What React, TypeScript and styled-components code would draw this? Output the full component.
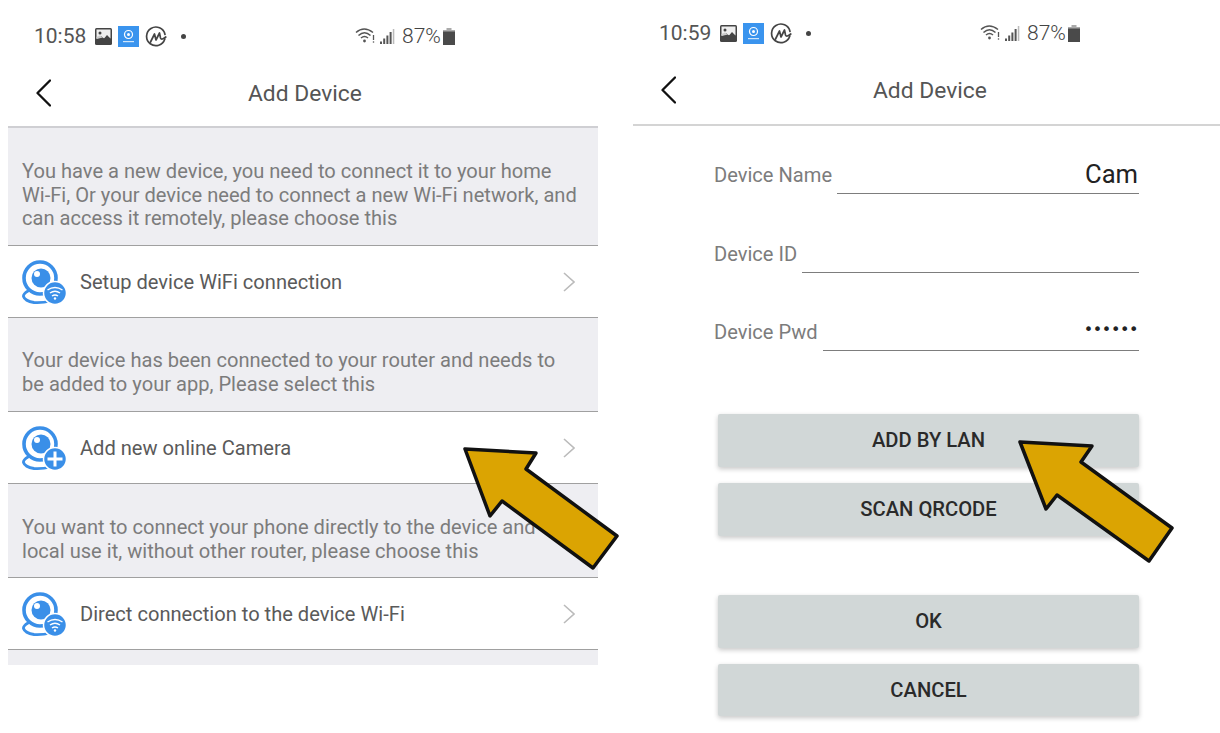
import React from 'react';
import styled, { createGlobalStyle } from 'styled-components';

const Global = createGlobalStyle`
  html, body { margin: 0; padding: 0; background: #fff; }
  body { font-family: Roboto, "Liberation Sans", sans-serif; }
`;

const Page = styled.div`
  position: relative;
  width: 1220px;
  height: 733px;
  overflow: hidden;
  display: flex;
  align-items: flex-start;
  background: #fff;
`;
const Panel = styled.div<{ $left: number; $width: number; $top: number }>`
  margin-left: ${p => p.$left}px;
  width: ${p => p.$width}px;
  padding-top: ${p => p.$top}px;
  flex: none;
`;
const StatusBar = styled.div`
  height: 46px;
  display: flex;
  align-items: center;
  color: #555;
  padding-left: 26px;
`;
const Time = styled.span`
  font-size: 21px;
  width: 61px;
  flex: none;
`;
const LeftIcons = styled.div`
  display: flex;
  align-items: center;
  gap: 6px;
  width: 260px;
  flex: none;
`;
const RightIcons = styled.div`
  display: flex;
  align-items: center;
`;
const WifiGap = styled.span`
  width: 4px;
`;
const Percent = styled.span`
  font-size: 21px;
  font-weight: 300;
  color: #444;
  margin: 0 2px 0 7px;
`;
const Nav = styled.div<{ $h: number; $line: string }>`
  box-sizing: border-box;
  height: ${p => p.$h}px;
  border-bottom: 2px solid ${p => p.$line};
  display: flex;
  align-items: center;
  padding-left: 28px;
`;
const Back = styled.svg`
  width: 15px;
  height: 28px;
  flex: none;
`;
const Title = styled.div`
  margin-left: 197px;
  font-size: 22.8px;
  color: #555;
  padding-top: 1px;
`;
const Note = styled.div<{ $h: number; $pt: number }>`
  box-sizing: border-box;
  height: ${p => p.$h}px;
  padding: ${p => p.$pt}px 18px 0 14px;
  background: #eeeef2;
  color: #7c7c7c;
  font-size: 20.1px;
  line-height: 23.7px;
  border-bottom: 1px solid #a0a0a0;
`;
const Row = styled.div`
  box-sizing: border-box;
  height: 72px;
  display: flex;
  align-items: center;
  padding: 0 23px 0 14px;
  background: #fff;
  border-bottom: 1px solid #a0a0a0;
`;
const RowLabel = styled.span`
  margin-left: 14px;
  font-size: 20.1px;
  color: #5a5a5a;
`;
const Chevron = styled.svg`
  margin-left: auto;
  width: 12px;
  height: 20px;
`;
const Tail = styled.div`
  height: 15px;
  background: #eeeef2;
`;
const Form = styled.div`
  padding: 28px 81px 0 81px;
  display: flex;
  flex-direction: column;
  gap: 38.5px;
`;
const Field = styled.div`
  height: 40px;
  display: flex;
  align-items: center;
  gap: 5px;
`;
const Label = styled.span`
  font-size: 20.1px;
  color: #7c7c7c;
  flex: none;
  padding-top: 2px;
`;
const Input = styled.div`
  flex: 1;
  height: 40px;
  box-sizing: border-box;
  border-bottom: 1.5px solid #7d7d7d;
  display: flex;
  align-items: center;
  justify-content: flex-end;
  color: #222;
`;
const CamText = styled.span`
  font-size: 25.6px;
  padding-right: 1px;
`;
const PwdDots = styled.span`
  font-size: 16px;
  letter-spacing: -0.4px;
  padding-bottom: 3px;
  padding-right: 1px;
  font-family: "DejaVu Sans", sans-serif;
`;
const Buttons = styled.div`
  margin: 63px 81px 0 85px;
  display: flex;
  flex-direction: column;
`;
const Button = styled.div<{ $mt: number }>`
  height: 52.5px;
  margin-top: ${p => p.$mt}px;
  background: #d1d7d7;
  border-radius: 2px;
  box-shadow: 0 2px 5px rgba(0, 0, 0, 0.22);
  display: flex;
  align-items: center;
  justify-content: center;
  font-size: 20.2px;
  font-weight: 500;
  color: #2a2a2a;
`;
const ArrowSvg = styled.svg<{ $x: number; $y: number }>`
  position: absolute;
  left: ${p => p.$x}px;
  top: ${p => p.$y}px;
  width: 170px;
  height: 135px;
`;

const Photo = () => (
  <svg width="17" height="17" viewBox="0 0 17 17">
    <rect width="17" height="17" rx="1.5" fill="#444" />
    <rect x="1.5" y="1.5" width="14" height="9" fill="#eee" />
    <circle cx="5" cy="5" r="1.5" fill="#444" />
    <path d="M1.5 12 L6 8 L9 10.5 L12 7 L15.5 10.5 V12 Z" fill="#444" />
    <path d="M1.5 9 L5 7.5 L8 9.5 L1.5 11 Z" fill="#ccc" />
  </svg>
);
const AppSquare = () => (
  <svg width="21" height="21" viewBox="0 0 21 21">
    <rect width="21" height="21" fill="#3a94ee" />
    <circle cx="10.5" cy="8.5" r="4" fill="none" stroke="#fff" strokeWidth="1.2" />
    <circle cx="10.5" cy="8.5" r="1.5" fill="#fff" />
    <rect x="5" y="15" width="11" height="1.2" fill="#cfe6fb" />
  </svg>
);
const Coin = () => (
  <svg width="22" height="21" viewBox="0 0 22 21" fill="none" stroke="#444" strokeWidth="1.7" strokeLinecap="round" strokeLinejoin="round">
    <path d="M19.8 13 A9.3 9.3 0 1 1 20 8.5" />
    <path d="M5.5 16 L9.5 8 L11 14 L14.5 7 L15.5 12 Q16.5 14.500 20.8 11" />
  </svg>
);
const Dot = styled.span`
  width: 5px;
  height: 5px;
  border-radius: 50%;
  background: #444;
  margin-left: 8px;
`;
const Wifi = () => (
  <svg width="21" height="18" viewBox="0 0 21 18" fill="none" stroke="#555" strokeWidth="1.5">
    <path d="M1 5.5 Q9 -1.5 18 5.5" />
    <path d="M3.5 8.5 Q9.500 3 15.500 8.500" />
    <path d="M6 11 Q9.500 8 13 11" />
    <circle cx="9.500" cy="14" r="1.400" fill="#555" stroke="none" />
    <path d="M18.500 8 V13" strokeWidth="1.300" />
    <circle cx="18.500" cy="15" r="0.800" fill="#555" stroke="none" />
  </svg>
);
const Signal = () => (
  <svg width="15" height="17" viewBox="0 0 15 17" fill="#555">
    <rect x="0" y="13.500" width="2" height="2.500" />
    <rect x="3.200" y="10.500" width="2" height="5.500" />
    <rect x="6.400" y="7.500" width="2" height="8.500" />
    <rect x="9.600" y="4" width="2" height="12" />
    <rect x="12.800" y="1" width="1.500" height="15" fill="#bbb" />
  </svg>
);
const Battery = () => (
  <svg width="12" height="17" viewBox="0 0 12 17">
    <rect x="3.500" y="0" width="5" height="2.500" fill="#aaa" />
    <rect x="0" y="2" width="12" height="2" fill="#aaa" />
    <rect x="0" y="3.500" width="12" height="13.500" fill="#4a4a4a" />
  </svg>
);

const Status = ({ time }: { time: string }) => (
  <StatusBar>
    <Time>{time}</Time>
    <LeftIcons>
      <Photo />
      <AppSquare />
      <Coin />
      <Dot />
    </LeftIcons>
    <RightIcons>
      <Wifi />
      <WifiGap />
      <Signal />
      <Percent>87%</Percent>
      <Battery />
    </RightIcons>
  </StatusBar>
);

const Header = ({ h, line }: { h: number; line: string }) => (
  <Nav $h={h} $line={line}>
    <Back viewBox="0 0 15 28" fill="none" stroke="#111" strokeWidth="2.300" strokeLinecap="round" strokeLinejoin="round">
      <path d="M14 1.500 L1.500 14 L14 26.500" />
    </Back>
    <Title>Add Device</Title>
  </Nav>
);

const CamIcon = ({ badge }: { badge: 'wifi' | 'plus' }) => (
  <svg width="44" height="44" viewBox="0 0 44 44" fill="none">
    <circle cx="18" cy="18" r="16" stroke="#3a8fe8" strokeWidth="3.600" />
    <circle cx="19" cy="18" r="9.500" fill="#3a8fe8" />
    <circle cx="15" cy="14" r="3" fill="#fff" />
    <path d="M6 31 Q1 34 1.500 36.500 Q3 41 12 42.500 Q20 43 29 41" stroke="#3a8fe8" strokeWidth="2.800" strokeLinecap="round" />
    <circle cx="33" cy="33" r="11.500" fill="#3a8fe8" stroke="#fff" strokeWidth="1.500" />
    {badge === 'plus' ? (
      <path d="M33 25.500 V40.500 M25.500 33 H40.500" stroke="#fff" strokeWidth="3" />
    ) : (
      <g stroke="#fff" strokeWidth="1.500">
        <path d="M25.500 30 Q33 25 40.500 30" />
        <path d="M28 33 Q33 29.500 38 33" />
        <path d="M30 36 Q33 34 36 36" />
        <circle cx="33" cy="38.500" r="1.200" fill="#fff" stroke="none" />
      </g>
    )}
  </svg>
);

const DeviceRow = ({ badge, label }: { badge: 'wifi' | 'plus'; label: string }) => (
  <Row>
    <CamIcon badge={badge} />
    <RowLabel>{label}</RowLabel>
    <Chevron viewBox="0 0 12 20" fill="none" stroke="#bbb" strokeWidth="1.600">
      <path d="M1 1 L11 10 L1 19" />
    </Chevron>
  </Row>
);

const Arrow = ({ x, y, points }: { x: number; y: number; points: string }) => (
  <ArrowSvg $x={x} $y={y} viewBox="0 0 170 135">
    <polygon points={points} fill="#dba402" stroke="#111" strokeWidth="3.500" strokeLinejoin="round" />
  </ArrowSvg>
);

export default function App() {
  return (
    <Page>
      <Global />
      <Panel $left={8} $width={590} $top={13}>
        <Status time="10:58" />
        <Header h={69} line="#cfcfd3" />
        <Note $h={118} $pt={32}>
          You have a new device, you need to connect it to your home Wi-Fi, Or your device need to connect a new Wi-Fi network, and can access it remotely, please choose this
        </Note>
        <DeviceRow badge="wifi" label="Setup device WiFi connection" />
        <Note $h={94} $pt={31}>
          Your device has been connected to your router and needs to be added to your app, Please select this
        </Note>
        <DeviceRow badge="plus" label="Add new online Camera" />
        <Note $h={94} $pt={32}>
          You want to connect your phone directly to the device and local use it, without other router, please choose this
        </Note>
        <DeviceRow badge="wifi" label="Direct connection to the device Wi-Fi" />
        <Tail />
      </Panel>
      <Panel $left={35} $width={587} $top={10}>
        <Status time="10:59" />
        <Header h={70} line="#d4d4d4" />
        <Form>
          <Field>
            <Label>Device Name</Label>
            <Input><CamText>Cam</CamText></Input>
          </Field>
          <Field>
            <Label>Device ID</Label>
            <Input />
          </Field>
          <Field>
            <Label>Device Pwd</Label>
            <Input><PwdDots>••••••</PwdDots></Input>
          </Field>
        </Form>
        <Buttons>
          <Button $mt={0}>ADD BY LAN</Button>
          <Button $mt={16.500}>SCAN QRCODE</Button>
          <Button $mt={59.500}>OK</Button>
          <Button $mt={16}>CANCEL</Button>
        </Buttons>
      </Panel>
      <Arrow x={460} y={444} points="5,5 76,9 66,25 157,92 133,124 42,57 30,72" />
      <Arrow x={1015} y={437} points="5,5 77,9 66,25 157,91 134,124 42,58 31,72" />
    </Page>
  );
}
